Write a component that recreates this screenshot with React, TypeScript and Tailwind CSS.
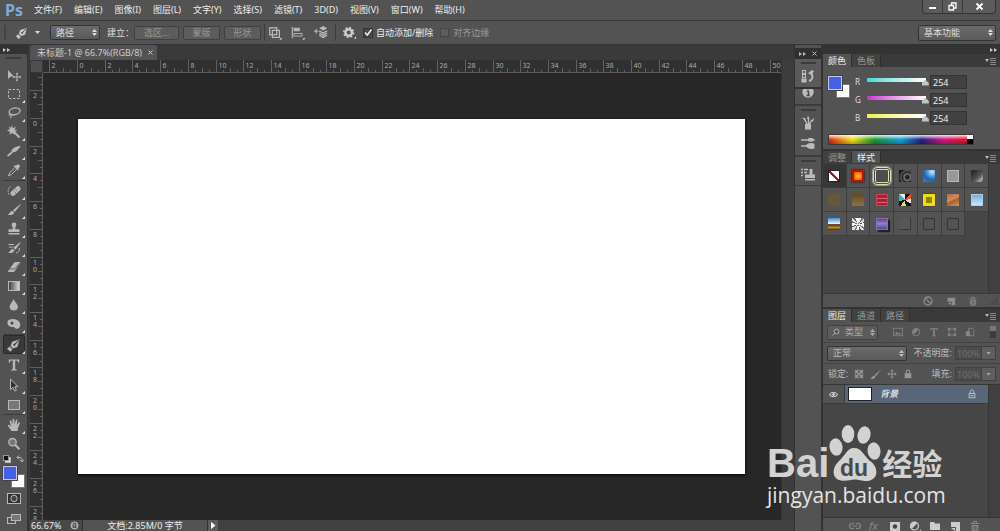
import { type ReactNode } from "react";
import { clsx } from "clsx";

const menus = ["文件(F)", "编辑(E)", "图像(I)", "图层(L)", "文字(Y)", "选择(S)", "滤镜(T)", "3D(D)", "视图(V)", "窗口(W)", "帮助(H)"];

const UNIT = 27.7; // pixels for two centimetres at 66.7%

function Glyph({ children, className = "size-4", box = "0 0 16 16" }: { children: ReactNode; className?: string; box?: string }) {
  return (
    <svg viewBox={box} className={clsx("shrink-0", className)} fill="none" stroke="currentColor" strokeWidth="1" aria-hidden="true">
      {children}
    </svg>
  );
}

const penIcon = (
  <g transform="rotate(45 8 8)">
    <path d="M8 0L4.3 7L6.2 11.2H9.8L11.7 7Z" fill="currentColor" stroke="none" />
    <path d="M8 1V7" stroke="#444" />
    <circle cx="8" cy="7.6" r="1.1" fill="#444" stroke="none" />
    <path d="M5.8 12.2H10.2V15.5H5.8Z" fill="currentColor" stroke="none" />
  </g>
);

type Tool = { name: string; icon: ReactNode; more?: boolean; active?: boolean };

const toolGroups: { className: string; tools: Tool[] }[] = [
  {
    className: "",
    tools: [
      { name: "移动工具", icon: <><path d="M2 3V12L4.6 9.4H8Z" fill="currentColor" stroke="none" /><path d="M11 6V14M7 10H15" /><path d="M9.7 7.3L11 5.6L12.3 7.3ZM9.7 12.7L11 14.4L12.3 12.7ZM8.3 8.7L6.6 10L8.3 11.3ZM13.7 8.7L15.4 10L13.7 11.3Z" fill="currentColor" stroke="none" /></> },
      { name: "矩形选框工具", more: true, icon: <rect x="2.5" y="3.5" width="11" height="9" strokeDasharray="2.5 1.5" /> },
      { name: "套索工具", more: true, icon: <><ellipse cx="8.5" cy="6.5" rx="5.5" ry="3.3" transform="rotate(-12 8 6)" strokeWidth="1.4" /><path d="M4.5 9C2.5 9 2.5 11.3 4.5 10.7C6.2 10 5.8 12.5 4 13.3" /></> },
      { name: "魔棒工具", more: true, icon: <><path d="M7 7L13.5 13.5" strokeWidth="2" /><path d="M6 1L7 4.2L10 2.8L8.7 5.8L11.5 7L8.3 7.8L9 10.8L6 9L3.5 11L4 7.7L1 6.5L4 5L2.6 2.4L5.2 3.7Z" fill="currentColor" stroke="none" /></> },
      { name: "裁剪工具", more: true, icon: <><path d="M14.5 3C10 3 6.4 5.2 5 8.6L8.5 9.2C10.8 8 13.2 6 14.5 3Z" fill="currentColor" stroke="none" /><path d="M6.5 9L1.5 13" strokeWidth="1.7" /></> },
      { name: "吸管工具", more: true, icon: <><path d="M12 2L14.4 4.2L12.2 6.4L13 7.2L11.8 8.4L7.6 4.3L8.8 3.1L9.7 4Z" fill="currentColor" stroke="none" /><path d="M8.6 5.8L3.8 10.6L2.5 13.8L5.6 12.4L10.4 7.6" /></> },
    ],
  },
  {
    className: "mt-px border-t",
    tools: [
      { name: "污点修复画笔工具", more: true, icon: <><rect x="3.5" y="5.5" width="12" height="5" rx="2.5" fill="currentColor" stroke="none" transform="rotate(-42 9.5 8)" /><path d="M7.5 8L10.5 10.7M9.2 6L12 8.8" stroke="#555" strokeDasharray="1 1" /><path d="M4.5 3.5C1.5 5 1.5 10 3.5 12.2" strokeDasharray="1.5 1" /></> },
      { name: "画笔工具", more: true, icon: <><path d="M14.5 2L7 8.2L8.8 10L14.8 2.6Z" fill="currentColor" stroke="none" /><path d="M6.3 8.8L8.3 10.7C7.4 13 4.5 13.4 1.5 12.9C3.8 12 4 9.3 6.3 8.8Z" fill="currentColor" stroke="none" /></> },
      { name: "仿制图章工具", more: true, icon: <path d="M8 1.5C9.8 1.5 10.7 2.8 10.2 4.3C9.8 5.6 9 6.3 9.3 8.3H13.5V11H2.5V8.3H6.7C7 6.3 6.2 5.6 5.8 4.3C5.3 2.8 6.2 1.5 8 1.5ZM2.5 12H13.5V13.5H2.5Z" fill="currentColor" stroke="none" /> },
      { name: "历史记录画笔工具", more: true, icon: <><path d="M14.5 2L7.2 7.7L9.5 9.7L14.8 2.6Z" fill="currentColor" stroke="none" /><path d="M6.5 8.8L8.5 10.5C7.5 13 5 13.4 2 12.9C4.2 12 4.2 9.3 6.5 8.8Z" fill="currentColor" stroke="none" /><path d="M2.5 4.5H8M3 7H6.5M13.3 8C14 11 12 12.6 10 13" /></> },
      { name: "橡皮擦工具", more: true, icon: <><path d="M8.7 3.5H14L8 12.5H2.3Z" fill="currentColor" /><path d="M3.5 10H9L13.5 4" stroke="#666" /></> },
      { name: "渐变工具", more: true, icon: <><defs><linearGradient id="tool-gradient"><stop stopColor="#3a3a3a" /><stop offset="1" stopColor="#ddd" /></linearGradient></defs><rect x="2.5" y="3.5" width="11" height="9" fill="url(#tool-gradient)" /></> },
      { name: "模糊工具", more: true, icon: <path d="M7.5 2C8.4 5 12 7 12 10C12 12.2 10 13.5 7.8 13.5C5.5 13.5 3.6 12 3.6 10C3.6 7 6.8 5 7.5 2Z" fill="currentColor" stroke="none" /> },
      { name: "海绵工具", more: true, icon: <><path d="M1.5 5.5C3 2.5 8.2 2.6 10.5 3.8C13.5 5.2 15 8 14 10.4C12.7 13.4 8.7 13.4 8.2 11C4.6 11.4 0.7 9.6 1.5 5.5Z" fill="currentColor" stroke="none" /><circle cx="6" cy="7" r="1.5" fill="#444" stroke="none" /></> },
    ],
  },
  {
    className: "mt-px gap-px border-t",
    tools: [
      { name: "钢笔工具", more: true, active: true, icon: penIcon },
      { name: "横排文字工具", more: true, icon: <path d="M2.8 2.5H13.2V5.8H12.3C12 4 11.3 3.6 9.2 3.6V11.6C9.2 12.4 9.7 12.6 10.9 12.7V13.5H5.1V12.7C6.3 12.6 6.8 12.4 6.8 11.6V3.6C4.7 3.6 4 4 3.7 5.8H2.8Z" fill="currentColor" stroke="none" /> },
      { name: "路径选择工具", more: true, icon: <path d="M4.5 2V12.5L7 10.3L8.7 14L10.4 13.2L8.8 9.7H12Z" fill="#333" /> },
      { name: "矩形工具", more: true, icon: <rect x="2.5" y="3.5" width="11" height="9" fill="#777" /> },
    ],
  },
  {
    className: "border-t",
    tools: [
      { name: "抓手工具", more: true, icon: <path d="M5.5 14L2 9C1.3 7.6 2.8 7.2 3.6 8.2L5 9.6L3.8 4.4C3.6 3 5 2.8 5.4 4L6.6 7.4V2.7C6.6 1.4 8.2 1.4 8.3 2.7L8.7 7.3L9.8 3.3C10.2 2 11.5 2.5 11.3 3.7L10.8 8L12.4 5.7C13.2 4.7 14.3 5.4 13.8 6.5L11.8 11.4V14Z" fill="currentColor" stroke="none" /> },
      { name: "缩放工具", icon: <><circle cx="6.5" cy="6.2" r="3.7" fill="#777" strokeWidth="1.3" /><path d="M9.3 9L13.5 13.3" strokeWidth="2.2" /></> },
    ],
  },
];

function ToolButton({ tool }: { tool: Tool }) {
  return (
    <button
      type="button"
      aria-label={tool.name}
      className={clsx("relative flex h-[19px] w-full items-center justify-center rounded-xs", tool.active && "bg-[#393939] outline-1 -outline-offset-1 outline-[#2a2a2a]")}
    >
      <Glyph>{tool.icon}</Glyph>
      {tool.more && <span className="absolute right-0 bottom-0 size-[3px] bg-[#ddd] [clip-path:polygon(100%_0,100%_100%,0_100%)]" />}
    </button>
  );
}

function DoubleArrow() {
  return (
    <Glyph className="h-[6px] w-[8px]" box="0 0 8 6">
      <path d="M0 1L3 3L0 5ZM4 1L7 3L4 5Z" fill="currentColor" stroke="none" />
    </Glyph>
  );
}

function ColorPair() {
  return (
    <div className="relative h-[22px] w-[22px]">
      <span className="absolute right-0 bottom-0 size-[14px] bg-white ring-1 ring-[#777] ring-inset" />
      <span className="absolute top-0 left-0 size-[14px] border border-[#c4cbe4] bg-[#4460e6] outline-1 outline-[#444]" />
    </div>
  );
}

function Toolbar() {
  return (
    <aside className="flex w-7 shrink-0 flex-col border-r border-[#333] bg-[#535353] text-[#b8b8b8]">
      <div className="flex h-[9px] shrink-0 items-center bg-[#333] pl-[3px] text-[#ccc]"><DoubleArrow /></div>
      <div className="mx-auto mt-[3px] mb-[6px] h-[2px] w-[15px] bg-[#3c3c3c]" />
      {toolGroups.map((group, i) => (
        <div key={i} className={clsx("ml-[3px] flex w-[22px] flex-col border-[#3c3c3c]", group.className)}>
          {group.tools.map((tool) => <ToolButton key={tool.name} tool={tool} />)}
        </div>
      ))}
      <div className="flex h-[12px] shrink-0 items-center justify-between px-[3px]">
        <Glyph className="size-2" box="0 0 8 8"><rect x="2.5" y="2.5" width="5" height="5" fill="#ddd" /><rect x="0.5" y="0.5" width="5" height="5" fill="#111" stroke="#999" /></Glyph>
        <Glyph className="size-2" box="0 0 8 8"><path d="M1 2.5H4C5.5 2.5 6 3.5 6 6M3 0.5L1 2.5L3 4.5M4.2 4.8L6 7L7.8 4.8" /></Glyph>
      </div>
      <div className="mt-px ml-[3px]"><ColorPair /></div>
      <button type="button" aria-label="快速蒙版" className="mt-1 flex h-[14px] items-center justify-center">
        <Glyph className="h-[12px] w-[14px]" box="0 0 14 12"><rect x="0.5" y="0.5" width="13" height="10" fill="#333" /><circle cx="7" cy="5.5" r="3.2" fill="#444" /></Glyph>
      </button>
      <button type="button" aria-label="屏幕模式" className="mt-[6px] flex h-[14px] items-center justify-center">
        <Glyph className="h-[12px] w-[14px]" box="0 0 14 12"><rect x="0.5" y="4.5" width="8" height="6" fill="#555" /><rect x="4.5" y="1.5" width="9" height="6" fill="#777" /></Glyph>
      </button>
    </aside>
  );
}

function Select({ label, value, className }: { label: string; value: string; className: string }) {
  return (
    <div className={clsx("grid shrink-0 items-center rounded-xs border border-[#333] bg-linear-to-b from-[#6b6b6b] to-[#5a5a5a]", className)}>
      <select aria-label={label} className="col-start-1 row-start-1 w-full appearance-none bg-transparent pl-[5px] text-inherit outline-none">
        <option>{value}</option>
      </select>
      <Glyph className="pointer-events-none col-start-1 row-start-1 mr-[2px] h-[7px] w-[5px] justify-self-end" box="0 0 5 7">
        <path d="M0 3L2.5 0L5 3ZM0 4L2.5 7L5 4Z" fill="currentColor" stroke="none" />
      </Glyph>
    </div>
  );
}

function MenuBar() {
  return (
    <header className="flex h-[21px] shrink-0 items-start border-b border-[#3a3a3a] bg-[#535353]">
      <span className="ml-[5px] w-[29px] text-[16px] leading-5 font-bold text-[#7fabda]">Ps</span>
      <nav className="flex gap-3">
        {menus.map((m) => <button key={m} type="button" className="leading-5 whitespace-nowrap text-[#eee]">{m}</button>)}
      </nav>
      <div className="mr-1 ml-auto flex h-[14px] divide-x divide-[#3a3a3a] rounded-b border border-t-0 border-[#333] bg-[#5c5c5c] text-white">
        <button type="button" aria-label="最小化" className="flex w-5 items-center justify-center"><Glyph className="size-[9px]" box="0 0 9 9"><path d="M1 6H8" strokeWidth="2" /></Glyph></button>
        <button type="button" aria-label="还原" className="flex w-5 items-center justify-center"><Glyph className="size-[9px]" box="0 0 9 9"><path d="M3.5 3V1H8V6H6M1 3.5H5.5V8H1Z" strokeWidth="1.3" /></Glyph></button>
        <button type="button" aria-label="关闭" className="flex w-8 items-center justify-center"><Glyph className="size-[9px]" box="0 0 9 9"><path d="M1.5 1.5L7.5 7.5M7.5 1.5L1.5 7.5" strokeWidth="1.8" /></Glyph></button>
      </div>
    </header>
  );
}

function OptionsBar() {
  return (
    <section className="flex h-6 shrink-0 items-center border-b border-[#333] bg-[#535353] text-[#ddd]">
      <div className="ml-1 h-[15px] w-[2px] bg-[#444]" />
      <Glyph className="ml-[9px] size-[14px] text-[#ccc]">{penIcon}</Glyph>
      <span className="ml-[6px] h-[3px] w-[5px] bg-[#ddd] [clip-path:polygon(0_0,100%_0,50%_100%)]" />
      <Select label="工具模式" value="路径" className="ml-[10px] h-[15px] w-[50px]" />
      <span className="ml-[7px] w-[27px] whitespace-nowrap">建立：</span>
      <div className="flex gap-1 text-[#999]">
        <button type="button" className="h-[14px] w-[45px] rounded-xs border border-[#404040] bg-[#5c5c5c] leading-3">选区...</button>
        <button type="button" className="h-[14px] w-[37px] rounded-xs border border-[#404040] bg-[#5c5c5c] leading-3">蒙版</button>
        <button type="button" className="h-[14px] w-[37px] rounded-xs border border-[#404040] bg-[#5c5c5c] leading-3">形状</button>
      </div>
      <div className="mx-[3px] h-[17px] w-px bg-[#3c3c3c]" />
      <div className="flex gap-[9px] text-[#bbb]">
        <button type="button" aria-label="路径操作"><Glyph className="size-[14px]"><rect x="2" y="2" width="8" height="8" strokeWidth="1.4" /><rect x="5" y="5" width="8" height="8" strokeWidth="1.4" /><path d="M15.5 13V15.5H13Z" fill="#fff" stroke="none" /></Glyph></button>
        <button type="button" aria-label="路径对齐方式"><Glyph className="size-[14px]"><path d="M1.5 1V14" strokeWidth="1.3" /><rect x="3.5" y="2.5" width="6" height="3" fill="currentColor" /><rect x="3.5" y="8.5" width="9" height="3" /><path d="M15.5 13V15.5H13Z" fill="#fff" stroke="none" /></Glyph></button>
        <button type="button" aria-label="路径排列方式"><Glyph className="size-[14px]"><path d="M0 6H5M2.5 3.5V8.5" strokeWidth="1.3" /><path d="M10.5 0L15 2.5L10.5 5L6 2.5Z" fill="currentColor" stroke="none" /><path d="M6 5.5L10.5 8L15 5.5M6 8L10.5 10.5L15 8M6 10.5L10.5 13L15 10.5" strokeWidth="1.5" /></Glyph></button>
      </div>
      <div className="mx-[7px] h-[17px] w-px bg-[#3c3c3c]" />
      <button type="button" aria-label="几何选项" className="text-[#ccc]">
        <Glyph className="size-[13px]"><circle cx="7" cy="8" r="4" strokeWidth="3" /><circle cx="7" cy="8" r="6" strokeWidth="2" strokeDasharray="2.3 2.4" /><path d="M16 13V15.5H13.5Z" fill="#fff" stroke="none" /></Glyph>
      </button>
      <label className="ml-[7px] flex items-center gap-[3px] whitespace-nowrap text-[#eee]">
        <span className="grid size-[10px]">
          <input type="checkbox" defaultChecked className="col-start-1 row-start-1 size-[10px] appearance-none border border-[#333] bg-[#484848]" />
          <Glyph className="pointer-events-none col-start-1 row-start-1 size-[10px]" box="0 0 10 10"><path d="M2 4.5L4.3 7L8.5 1.5" strokeWidth="1.5" /></Glyph>
        </span>
        自动添加/删除
      </label>
      <label className="ml-[7px] flex items-center gap-1 whitespace-nowrap text-[#999]">
        <input type="checkbox" disabled className="size-[9px] appearance-none border border-[#444] bg-[#5c5c5c]" />
        对齐边缘
      </label>
      <Select label="工作区" value="基本功能" className="mr-1 ml-auto h-4 w-[78px]" />
    </section>
  );
}

function HorizontalRuler() {
  return (
    <svg className="h-[13px] min-w-0 flex-1 border-b border-[#5c5c5c] bg-[#303030]" aria-label="水平标尺">
      {Array.from({ length: 27 }, (_, i) => {
        const x = Math.round(35 + (i - 1) * UNIT) - 0.5;
        return (
          <g key={i} stroke="#606060">
            <path d={`M${x} 0V13M${x + 7} 10V13M${x + 14} 8V13M${x + 21} 10V13`} />
            <text x={x + 2} y="8" fontSize="7" fill="#aaa" stroke="none">{Math.abs(i - 1) * 2}</text>
          </g>
        );
      })}
    </svg>
  );
}

function VerticalRuler() {
  return (
    <svg className="h-full w-[13px] shrink-0 border-r border-[#5c5c5c] bg-[#303030]" aria-label="垂直标尺">
      {Array.from({ length: 17 }, (_, i) => {
        const y = Math.round(46 + (i - 2) * UNIT) - 0.5;
        return (
          <g key={i} stroke="#606060">
            <path d={`M0 ${y}H13M10 ${y + 7}H13M8 ${y + 14}H13M10 ${y + 21}H13`} />
            {i > 0 && String(Math.abs(i - 2) * 2).split("").map((digit, n) => (
              <text key={n} x="3" y={y + 7 + n * 7} fontSize="7" fill="#aaa" stroke="none">{digit}</text>
            ))}
          </g>
        );
      })}
    </svg>
  );
}

function DocumentWindow() {
  return (
    <main className="flex min-w-0 flex-1 flex-col bg-[#3a3a3a] pl-[2px]">
      <div className="flex h-[15px] shrink-0">
        <div className="flex items-center gap-[6px] rounded-t-xs bg-[#535353] pr-1 pl-[7px] text-[#ccc]">
          <span className="whitespace-nowrap">未标题-1 @ 66.7%(RGB/8)</span>
          <button type="button" aria-label="关闭文档"><Glyph className="size-[5px]" box="0 0 5 5"><path d="M0.5 0.5L4.5 4.5M4.5 0.5L0.5 4.5" /></Glyph></button>
        </div>
      </div>
      <div className="flex min-h-0 flex-1">
        <div className="flex min-w-0 flex-1 flex-col">
          <div className="flex">
            <div className="size-[13px] border border-[#383838] bg-[#505050]" />
            <HorizontalRuler />
          </div>
          <div className="flex min-h-0 flex-1 bg-[#272727]">
            <VerticalRuler />
            <div className="flex flex-1 pt-[46px] pr-9 pb-[46px] pl-[35px]">
              <div className="flex-1 bg-white shadow-[0_1px_3px_#000]" />
            </div>
          </div>
        </div>
        <div className="w-[13px] border-l border-[#333] bg-[#3d3d3d]" />
      </div>
      <footer className="flex h-[11px] shrink-0 items-center bg-[#484848] leading-[11px] text-[#eee]">
        <span className="w-9 pl-px">66.67%</span>
        <span className="flex w-4 justify-center"><Glyph className="size-[9px]" box="0 0 10 10"><circle cx="5" cy="5" r="4" fill="#999" stroke="#bbb" /><path d="M3.5 2.5H6V7M3.5 4V7H7" stroke="#444" /></Glyph></span>
        <span className="h-full w-[126px] border-x border-[#333] bg-[#535353] text-center whitespace-nowrap">文档:2.85M/0 字节</span>
        <button type="button" aria-label="状态栏选项" className="flex h-full w-[10px] items-center justify-center bg-[#5c5c5c]"><span className="h-2 w-[5px] bg-white [clip-path:polygon(0_0,100%_50%,0_100%)]" /></button>
        <span className="h-full flex-1 bg-[#404040]" />
      </footer>
    </main>
  );
}

function Grip() {
  return <div className="mx-auto h-[2px] w-[15px] shrink-0 bg-[#3c3c3c]" />;
}

function IconDock() {
  return (
    <aside className="flex w-[28px] shrink-0 flex-col border-x border-[#333] bg-[#535353] pt-[3px] text-[#bcbcbc]">
      <div className="flex h-[11px] items-center justify-between bg-[#303030] px-1">
        <DoubleArrow />
        <Glyph className="size-[5px]" box="0 0 5 5"><path d="M0.5 0.5L4.5 4.5M4.5 0.5L0.5 4.5" /></Glyph>
      </div>
      <div className="flex h-[30px] flex-col items-center gap-[4px] border-b-2 border-[#333] bg-[#5a5a5a] pt-[3px]">
        <Grip />
        <button type="button" aria-label="历史记录"><Glyph><rect x="2.5" y="2.5" width="3" height="3" /><rect x="2.5" y="6.5" width="3" height="3" /><rect x="2" y="11" width="4" height="3" fill="currentColor" /><path d="M9 13C12.5 12 13.5 8.5 11.3 5.5" strokeWidth="2" /><path d="M8 5.5L11 2.5H14L12 7Z" fill="currentColor" stroke="none" /></Glyph></button>
      </div>
      <div className="flex h-[17px] items-start justify-center overflow-hidden border-b-2 border-[#3c3c3c]">
        <button type="button" aria-label="信息" className="-mt-1"><Glyph className="size-[14px]"><circle cx="8" cy="8" r="6.5" fill="currentColor" stroke="none" /><path d="M8 3V5.2M6.5 7H8.5V12M6.3 12H10" stroke="#484848" strokeWidth="1.7" /></Glyph></button>
      </div>
      <div className="flex h-[51px] flex-col items-center gap-[4px] border-b-2 border-[#3c3c3c] pt-[3px]">
        <Grip />
        <button type="button" aria-label="画笔预设"><Glyph><path d="M5 9H11V14.5H5Z" fill="currentColor" stroke="none" /><path d="M7 9L4.5 4M8.5 9V3.5M9.5 9L12 5" strokeWidth="1.4" /><path d="M2 2.5L5.5 3.2L5 6ZM8 0.5L9.6 4H7ZM11 5.5L14.3 3L12.8 7Z" fill="currentColor" stroke="none" /></Glyph></button>
        <button type="button" aria-label="画笔"><Glyph><path d="M1 5H9M8 11H1" strokeWidth="1.5" /><path d="M8 3.5C11 2.5 13 3 15 5C13 7 11 7 8 6.2ZM6 10.5C8 7.5 12 7.5 14.5 9V13.5C12 14.5 8 14 6 11.5Z" fill="currentColor" stroke="none" /></Glyph></button>
      </div>
      <div className="flex h-[29px] flex-col items-center gap-[5px] border-b border-[#3c3c3c] pt-[3px]">
        <Grip />
        <button type="button" aria-label="仿制源"><Glyph><path d="M1 2.5H3M4 2.5H8M1 5.5H3M4 5.5H7M1 8.5H3" strokeWidth="1.3" /><path d="M9.5 2H12.5V7.5H15V11H5V7.5H9.5ZM5 12H15V13.5H5Z" fill="currentColor" stroke="none" /></Glyph></button>
      </div>
    </aside>
  );
}

function PanelTabs({ tabs, active }: { tabs: string[]; active: string }) {
  return (
    <div className="flex h-[13px] shrink-0 items-stretch bg-[#3a3a3a]" role="tablist">
      {tabs.map((tab) => (
        <button
          key={tab}
          type="button"
          role="tab"
          aria-selected={tab === active}
          className={clsx("border-r border-[#303030] px-1 leading-[13px] whitespace-nowrap", tab === active ? "bg-[#535353] text-[#eee]" : "bg-[#414141] text-[#999]")}
        >
          <span className="px-px">{tab}</span>
        </button>
      ))}
      <button type="button" aria-label="面板菜单" className="mr-1 ml-auto text-[#bbb]">
        <Glyph className="h-[8px] w-[11px]" box="0 0 11 8"><path d="M0 2H4L2 5Z" fill="currentColor" stroke="none" /><path d="M5 1.5H11M5 3.5H11M5 5.5H11M5 7.5H11" stroke="#888" /></Glyph>
      </button>
    </div>
  );
}

const channels = [
  { name: "R", track: "from-[#34d9d9] to-white" },
  { name: "G", track: "from-[#c92bd0] to-white" },
  { name: "B", track: "from-[#f2ef36] to-white" },
];

function ColorPanel() {
  return (
    <section className="shrink-0 border-b-2 border-[#333] bg-[#535353]">
      <PanelTabs tabs={["颜色", "色板"]} active="颜色" />
      <div className="flex pt-2 pl-[5px]">
        <div className="pt-px"><ColorPair /></div>
        <div className="ml-[5px] flex flex-col gap-1">
          {channels.map((c) => (
            <div key={c.name} className="flex h-[14px] items-center">
              <label htmlFor={`channel-${c.name}`} className="w-3 text-[8px] text-[#ddd]">{c.name}</label>
              <input
                type="range"
                min={0}
                max={255}
                defaultValue={254}
                aria-label={`${c.name} 滑块`}
                className={clsx(
                  "mb-[5px] h-[4px] w-[59px] appearance-none bg-linear-to-r [&::-webkit-slider-thumb]:mt-[6px] [&::-webkit-slider-thumb]:h-[6px] [&::-webkit-slider-thumb]:w-[7px] [&::-webkit-slider-thumb]:translate-x-[3px] [&::-webkit-slider-thumb]:appearance-none [&::-webkit-slider-thumb]:bg-[#c4c4c4] [&::-webkit-slider-thumb]:[clip-path:polygon(50%_0,100%_60%,100%_100%,0_100%,0_60%)]",
                  c.track,
                )}
              />
              <input id={`channel-${c.name}`} defaultValue="254" className="ml-1 h-[14px] w-[37px] border border-[#333] bg-[#414141] pl-[2px] text-[#eee]" />
            </div>
          ))}
        </div>
      </div>
      <div className="mt-[9px] mb-1 ml-[5px] flex h-[11px] w-[146px] border border-[#3a3a3a]">
        <div className="flex-1 bg-[linear-gradient(180deg,#fffd_0%,#fff0_50%,#0004_100%),linear-gradient(90deg,#e22a12,#f6e517_17%,#199b34_33%,#12a5e0_52%,#252384_67%,#d51984_83%,#e21625)]" />
        <div className="w-[6px] bg-[linear-gradient(#fff_50%,#000_50%)]" />
      </div>
    </section>
  );
}

const styleSwatches = [
  { name: "默认样式", className: "border border-[#222] bg-[linear-gradient(to_top_right,#fff_43%,#a01414_43%,#a01414_57%,#fff_57%)]" },
  { name: "日落", className: "border-2 border-[#b91606] bg-[radial-gradient(#ffd22e,#f85b0c_75%)] shadow-[0_0_2px_#100]" },
  { name: "描边", className: "size-[18px]! rounded-sm border-3 border-double border-[#dcdcb4] bg-[#4d4d4d] outline-1 outline-[#96967c]" },
  { name: "铬黄", className: "bg-[radial-gradient(circle_at_70%_60%,#222_15%,#777_30%,#222_45%,#555_60%,#1c1c1c_75%),linear-gradient(#222,#222)]" },
  { name: "蓝色玻璃", className: "bg-[radial-gradient(circle_at_75%_15%,#cfeaff_0%,#4b9ae2_35%,#1c62ac_60%,#3f8ad0_100%)]" },
  { name: "灰色", className: "border border-[#b8b8b8] bg-[#999]" },
  { name: "暗色斜面", className: "bg-[linear-gradient(135deg,#2a2a2a_15%,#555_60%,#aaa_85%,#444)]" },
  { name: "橄榄", className: "bg-[#655838]" },
  { name: "棕色渐变", className: "bg-[linear-gradient(#5f4a24,#8a7446)]" },
  { name: "红色织物", className: "border border-[#c74758] bg-[repeating-linear-gradient(#b51c34_0_3px,#d56572_3px_4px)]" },
  { name: "迷彩", className: "bg-[conic-gradient(#111_12%,#ef5540_12%_22%,#eee_22%_34%,#111_34%_48%,#f0dc43_48%_60%,#111_60%_72%,#25bfc5_72%_88%,#eee_88%)]" },
  { name: "金色边框", className: "border-3 border-[#f4dc0d] bg-[#8d8600] shadow-[0_0_1px_#222]" },
  { name: "铜色", className: "bg-[linear-gradient(155deg,#a37163,#d88b50_45%,#a75f2b_55%,#c49a63)]" },
  { name: "天蓝", className: "border border-[#a9cfee] bg-[linear-gradient(#76aee0,#cfe6fa)]" },
  { name: "风景", className: "bg-[linear-gradient(#3b8ed5,#eaf9ff_50%,#4b2909_55%,#c98c19_80%,#4c2a08)]" },
  { name: "噪点", className: "bg-[repeating-conic-gradient(#f4f4f4_0_9%,#777_9%_13%,#ddd_13%_20%,#555_20%_23%)]" },
  { name: "紫色投影", className: "border border-[#8272b4] bg-[linear-gradient(#56438c,#9b7ec0_45%,#3f4f9f)] shadow-[2px_2px_1px_#222]" },
  { name: "浮雕", className: "border-r border-b border-[#383838] bg-[#575757]" },
  { name: "细描边", className: "rounded-xs border border-[#333] bg-[#535353]" },
  { name: "外描边", className: "rounded-xs border border-[#333] bg-[#535353]" },
];

const noneIcon = <><circle cx="6" cy="6" r="4" strokeWidth="1.3" /><path d="M3 3L9 9" strokeWidth="1.3" /></>;
const newIcon = <path d="M2 2H11V11H7V7H2Z M2 8H6V11Z" fill="currentColor" stroke="none" />;
const trashIcon = <><path d="M1.5 3.5H10.5M4.5 3V1.5H7.5V3" /><path d="M2.5 5H9.5L9 11.5H3Z" fill="currentColor" stroke="none" /><path d="M5 6V10.5M7 6V10.5" stroke="#505050" /></>;

function StylesPanel() {
  return (
    <section className="shrink-0 border-b-2 border-[#333] bg-[#464646]">
      <PanelTabs tabs={["调整", "样式"]} active="样式" />
      <div className="flex h-[129px]">
        <div className="flex-1">
          <ul className="grid h-[71px] w-full grid-cols-7 grid-rows-3 gap-px">
            {styleSwatches.map((s, i) => (
              <li key={s.name} className={clsx("flex outline-1 outline-[#3d3d3d]", i === 0 ? "bg-[#363636]" : "bg-[#535353]")}>
                <button type="button" aria-label={s.name} className="flex flex-1 items-center justify-center"><span className={clsx("size-3", s.className)} /></button>
              </li>
            ))}
          </ul>
        </div>
        <div className="w-3 border-l border-[#363636] bg-[#404040]" />
      </div>
      <div className="flex h-[14px] items-center justify-end gap-[12px] border-t border-[#3a3a3a] bg-[#535353] pr-[2px] text-[#8c8c8c]">
        <button type="button" aria-label="清除样式"><Glyph className="size-3" box="0 0 12 12">{noneIcon}</Glyph></button>
        <button type="button" aria-label="新建样式"><Glyph className="size-[10px]" box="0 0 12 12">{newIcon}</Glyph></button>
        <button type="button" aria-label="删除样式"><Glyph className="size-[10px]" box="0 0 12 12">{trashIcon}</Glyph></button>
        <Glyph className="size-2" box="0 0 8 8"><path d="M0 8L8 0M3 8L8 3M6 8L8 6" stroke="#3c3c3c" /></Glyph>
      </div>
    </section>
  );
}

const lockIcon = <><rect x="2" y="5" width="8" height="6" fill="currentColor" stroke="none" /><path d="M4 5V3C4 0.5 8 0.5 8 3V5" strokeWidth="1.3" /></>;

const filterIcons = [
  { name: "像素图层", icon: <><rect x="0.5" y="1.5" width="11" height="9" /><path d="M2 9L4.5 5.5L6.5 8L8 6.5L10 9Z" fill="currentColor" stroke="none" /></> },
  { name: "调整图层", icon: <><circle cx="6" cy="6" r="4.5" /><path d="M3 9L9 3A4.3 4.3 0 0 0 3 9Z" fill="currentColor" stroke="none" /></> },
  { name: "文字图层", icon: <path d="M1.5 1.5H10.5V4H9.7L9 2.7H7V10L8.5 10.5V11H3.5V10.5L5 10V2.7H3L2.3 4H1.5Z" fill="currentColor" stroke="none" /> },
  { name: "形状图层", icon: <><rect x="2.5" y="2.5" width="7" height="7" /><path d="M1 1H4V4H1ZM8 1H11V4H8ZM1 8H4V11H1ZM8 8H11V11H8Z" fill="currentColor" stroke="none" /></> },
  { name: "智能对象", icon: <><path d="M4.5 1.5H8.5L10.5 3.5V10.5H4.5Z" /><rect x="1" y="5" width="5" height="6" fill="currentColor" stroke="none" /></> },
];

const layerActions = [
  { name: "链接图层", dim: true, icon: <path d="M5 3.5H3A2.5 2.5 0 0 0 3 8.5H5M7 3.5H9A2.5 2.5 0 0 1 9 8.5H7M3.5 6H8.5" strokeWidth="1.2" /> },
  { name: "图层样式", dim: true, icon: <text x="0" y="10" fontSize="11" fontStyle="italic" fill="currentColor" stroke="none">fx</text> },
  { name: "添加蒙版", icon: <><rect x="1.5" y="2.5" width="9" height="8" fill="currentColor" /><circle cx="6" cy="6.5" r="2.2" fill="#444" stroke="none" /></> },
  { name: "新建调整图层", icon: <><circle cx="5.5" cy="6" r="4" strokeWidth="1.2" /><path d="M2.6 8.9L8.4 3.1A4.1 4.1 0 0 0 2.6 8.9Z" fill="currentColor" stroke="none" /><path d="M12 9.5V12H9.5Z" fill="currentColor" stroke="none" /></> },
  { name: "新建组", icon: <path d="M1 2H5L6 3.5H11V10H1Z" fill="currentColor" stroke="none" /> },
  { name: "新建图层", icon: newIcon },
  { name: "删除图层", dim: true, icon: trashIcon },
];

function PercentField({ id, label }: { id: string; label: string }) {
  return (
    <div className="ml-auto flex items-center">
      <label htmlFor={id} className="whitespace-nowrap">{label}</label>
      <input id={id} defaultValue="100%" disabled className="ml-[3px] h-[14px] w-[27px] border border-[#404040] bg-[#4c4c4c] pl-px text-[#6e6e6e]" />
      <button type="button" aria-label={`${label}选项`} className="flex h-[14px] w-[14px] items-center justify-center border border-l-0 border-[#404040] bg-[#5f5f5f]">
        <span className="h-[3px] w-[5px] bg-[#aaa] [clip-path:polygon(0_0,100%_0,50%_100%)]" />
      </button>
    </div>
  );
}

function LayersPanel() {
  return (
    <section className="flex min-h-0 flex-1 flex-col bg-[#464646]">
      <PanelTabs tabs={["图层", "通道", "路径"]} active="图层" />
      <div className="flex h-[21px] shrink-0 items-center border-b border-[#444] bg-[#535353] px-1 text-[#aaa]">
        <div className="flex h-[15px] items-center rounded-xs border border-[#404040] bg-[#5c5c5c] pl-1">
          <Glyph className="size-2" box="0 0 8 8"><circle cx="4.5" cy="3.5" r="2.5" /><path d="M2.8 5.2L0.5 7.5" /></Glyph>
          <Select label="图层过滤" value="类型" className="w-[37px] border-0 bg-none" />
        </div>
        <div className="ml-[15px] flex gap-2 text-[#858585]">
          {filterIcons.map((f) => <button key={f.name} type="button" aria-label={f.name}><Glyph className="size-[10px]" box="0 0 12 12">{f.icon}</Glyph></button>)}
        </div>
        <button type="button" aria-label="过滤开关" className="ml-auto flex h-3 w-[6px] flex-col bg-[#3c3c3c]"><span className="h-[5px] w-full bg-[#777]" /></button>
      </div>
      <div className="flex h-[21px] shrink-0 items-center border-b border-[#444] bg-[#535353] px-1 text-[#bbb]">
        <Select label="混合模式" value="正常" className="h-[15px] w-[80px] text-[#bbb]" />
        <PercentField id="opacity" label="不透明度:" />
      </div>
      <div className="flex h-[20px] shrink-0 items-center bg-[#535353] pr-1 pl-[5px] text-[#bbb]">
        <span className="whitespace-nowrap">锁定:</span>
        <div className="ml-[6px] flex gap-[6px] text-[#969696]">
          <button type="button" aria-label="锁定透明像素"><Glyph className="size-[10px]" box="0 0 12 12"><rect x="1.5" y="1.5" width="9" height="9" /><path d="M2 2H5V5H2ZM7 2H10V5H7ZM4.5 4.5H7.5V7.5H4.5ZM2 7H5V10H2ZM7 7H10V10H7Z" fill="currentColor" stroke="none" /></Glyph></button>
          <button type="button" aria-label="锁定图像像素"><Glyph className="size-[11px]" box="0 0 12 12"><path d="M12 0.5L5 6.5L6.5 8ZM4.5 7L6 8.7C5 11 2.5 11 0 10.8C2 10 2 7.5 4.5 7Z" fill="currentColor" stroke="none" /></Glyph></button>
          <button type="button" aria-label="锁定位置"><Glyph className="size-[10px]" box="0 0 12 12"><path d="M6 1V11M1 6H11M4.3 2.7L6 1L7.7 2.7M4.3 9.3L6 11L7.7 9.3M2.7 4.3L1 6L2.7 7.7M9.3 4.3L11 6L9.3 7.7" strokeWidth="1.2" /></Glyph></button>
          <button type="button" aria-label="锁定全部"><Glyph className="size-[10px]" box="0 0 12 12">{lockIcon}</Glyph></button>
        </div>
        <PercentField id="fill" label="填充:" />
      </div>
      <div className="flex min-h-0 flex-1 border-t border-[#363636]">
        <ul className="flex-1">
          <li className="flex h-[19px] items-stretch border-b border-[#3a3a3a] bg-[#535353] text-[#ccc]">
            <button type="button" aria-label="显示图层" className="flex w-[22px] items-center justify-center border-r border-[#3c3c3c]">
              <Glyph className="h-[7px] w-[9px]" box="0 0 10 8"><path d="M0.5 4C2.5 0.5 7.5 0.5 9.5 4C7.5 7.5 2.5 7.5 0.5 4Z" strokeWidth="1.2" /><circle cx="5" cy="4" r="1.6" fill="currentColor" stroke="none" /></Glyph>
            </button>
            <div className="flex flex-1 items-center bg-[#596678] pr-[11px] pl-[3px]">
              <span className="h-[14px] w-6 border border-[#222] bg-white" />
              <span className="ml-2 text-white italic">背景</span>
              <Glyph className="ml-auto size-[10px]" box="0 0 12 12"><rect x="2.5" y="5.5" width="7" height="5" /><path d="M4 5V3C4 0.5 8 0.5 8 3V5M4 8H8" /></Glyph>
            </div>
          </li>
        </ul>
        <div className="w-3 border-l border-[#363636] bg-[#404040]" />
      </div>
      <div className="flex h-[14px] shrink-0 items-center gap-2 border-t border-[#363636] bg-[#535353] pt-[2px] pl-[26px] text-[#ccc]">
        {layerActions.map((a) => (
          <button key={a.name} type="button" aria-label={a.name} className={clsx(a.dim && "text-[#888]")}><Glyph className="size-[12px]" box="0 0 12 12">{a.icon}</Glyph></button>
        ))}
      </div>
    </section>
  );
}

function Watermark() {
  return (
    <div className="pointer-events-none absolute right-[55px] bottom-[21px] w-[178px] text-[#d2d2d2]">
      <div className="flex h-[56px] items-end">
        <span className="font-['Liberation_Sans',sans-serif] text-[40px] leading-[36px] font-bold">Bai</span>
        <Glyph className="h-[56px] w-[53px]" box="0 0 53 56">
          <g fill="currentColor" stroke="none">
            <ellipse cx="7" cy="22" rx="6.5" ry="8.7" transform="rotate(-8 7 22)" />
            <ellipse cx="19" cy="9" rx="6.3" ry="9" />
            <ellipse cx="35" cy="10" rx="6.5" ry="8.8" transform="rotate(12 35 10)" />
            <ellipse cx="45" cy="26" rx="6.5" ry="8.7" transform="rotate(-8 45 26)" />
            <path d="M25 23C33 23 35 31 41 36C50 42 50 55 38 56C32 56 30 54.5 26 54.5C21 54.5 18 56.5 12 55.5C2 53.5 3 42 10 36C16 31 18 23 25 23Z" />
            <text x="11" y="51" fontSize="23" fontWeight="bold" fill="#494949" className="font-['Liberation_Sans',sans-serif]">du</text>
          </g>
        </Glyph>
        <span className="text-[30px] leading-[34px] font-bold">经验</span>
      </div>
      <p className="font-['Open_Sans',sans-serif] text-[21px] leading-[29px] whitespace-nowrap text-[#e4e4e4]">jingyan.baidu.com</p>
    </div>
  );
}

export default function App() {
  return (
    <div className="relative flex h-screen flex-col overflow-hidden bg-[#333] font-['Noto_Sans','Noto_Sans_CJK_SC',sans-serif] text-[9px] leading-3 select-none">
      <MenuBar />
      <OptionsBar />
      <div className="flex min-h-0 flex-1">
        <Toolbar />
        <DocumentWindow />
        <IconDock />
        <aside className="ml-px flex w-[177px] shrink-0 flex-col">
          <div className="flex h-[9px] shrink-0 items-center justify-end pr-[2px] text-[#ccc]"><DoubleArrow /></div>
          <ColorPanel />
          <StylesPanel />
          <LayersPanel />
        </aside>
      </div>
      <Watermark />
    </div>
  );
}
